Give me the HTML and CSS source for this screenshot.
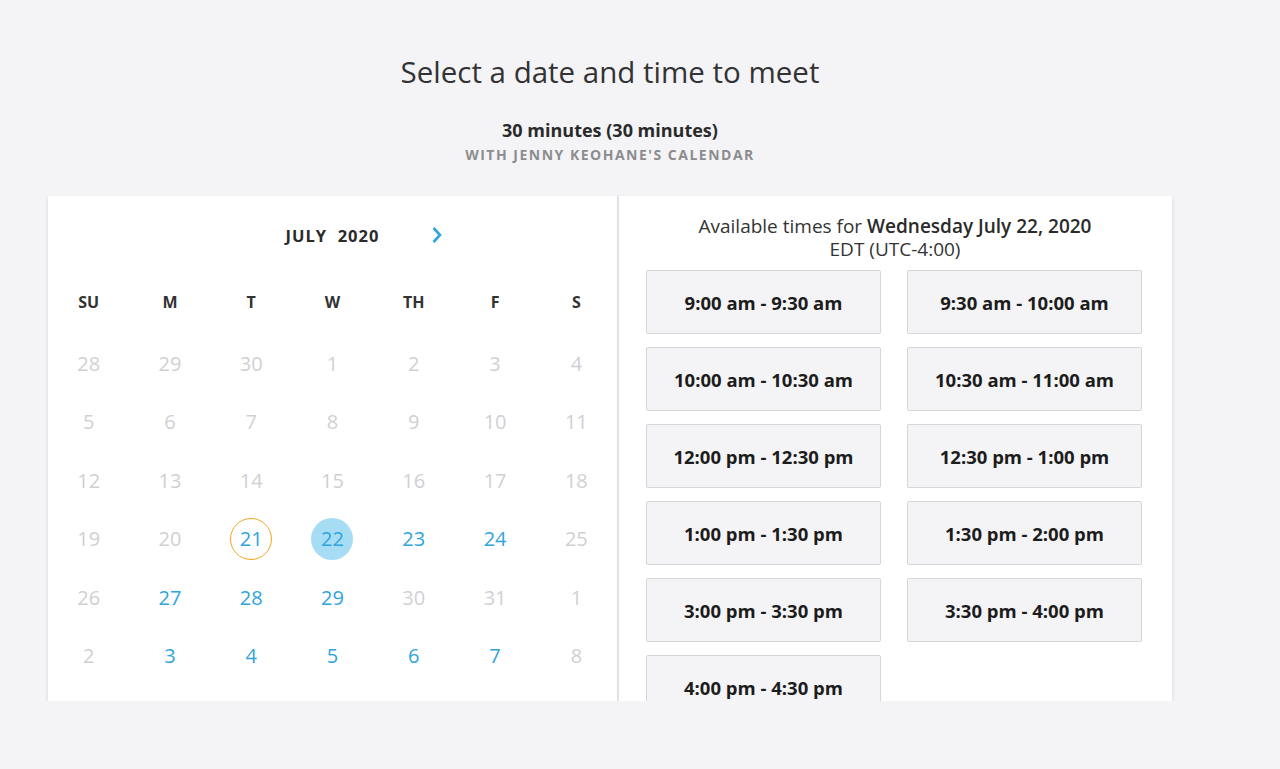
FILE: index.html
```html
<!DOCTYPE html>
<html lang="en">
  <head>
    <meta charset="UTF-8" />
    <meta name="viewport" content="width=device-width, initial-scale=1.0" />
    <title>Select a date and time to meet</title>
    <link rel="stylesheet" href="styles.css">
  </head>
  <body>
    <div class="page">
      <header class="intro">
        <h1>Select a date and time to meet</h1>
        <p class="duration">30 minutes (30 minutes)</p>
        <p class="owner">With Jenny Keohane's calendar</p>
      </header>

      <div class="card">
        <div class="calendar">
          <div class="month">
            <span class="month-name">JULY&nbsp; 2020</span>
            <span class="next">
              <svg width="12" height="18" viewBox="0 0 12 18"><path d="M2.5 2 L9 9 L2.5 16" fill="none" stroke="#2fa4dd" stroke-width="2.6" /></svg>
            </span>
          </div>
          <div class="weekdays">
            <span>SU</span><span>M</span><span>T</span><span>W</span><span>TH</span><span>F</span><span>S</span>
          </div>
          <div class="days">
            <span class="off">28</span><span class="off">29</span><span class="off">30</span><span class="off">1</span><span class="off">2</span><span class="off">3</span><span class="off">4</span>
            <span class="off">5</span><span class="off">6</span><span class="off">7</span><span class="off">8</span><span class="off">9</span><span class="off">10</span><span class="off">11</span>
            <span class="off">12</span><span class="off">13</span><span class="off">14</span><span class="off">15</span><span class="off">16</span><span class="off">17</span><span class="off">18</span>
            <span class="off">19</span><span class="off">20</span><span class="on today"><b>21</b></span><span class="on selected"><b>22</b></span><span class="on">23</span><span class="on">24</span><span class="off">25</span>
            <span class="off">26</span><span class="on">27</span><span class="on">28</span><span class="on">29</span><span class="off">30</span><span class="off">31</span><span class="off">1</span>
            <span class="off">2</span><span class="on">3</span><span class="on">4</span><span class="on">5</span><span class="on">6</span><span class="on">7</span><span class="off">8</span>
          </div>
        </div>

        <div class="times">
          <div class="times-head">
            Available times for <strong>Wednesday July 22, 2020</strong><br />
            EDT (UTC-4:00)
          </div>
          <div class="slots">
            <button class="slot">9:00 am - 9:30 am</button>
            <button class="slot">9:30 am - 10:00 am</button>
            <button class="slot">10:00 am - 10:30 am</button>
            <button class="slot">10:30 am - 11:00 am</button>
            <button class="slot">12:00 pm - 12:30 pm</button>
            <button class="slot">12:30 pm - 1:00 pm</button>
            <button class="slot">1:00 pm - 1:30 pm</button>
            <button class="slot">1:30 pm - 2:00 pm</button>
            <button class="slot">3:00 pm - 3:30 pm</button>
            <button class="slot">3:30 pm - 4:00 pm</button>
            <button class="slot">4:00 pm - 4:30 pm</button>
          </div>
        </div>
      </div>
    </div>
  </body>
</html>
```

FILE: styles.css
```css
* {
  box-sizing: border-box;
}

body {
  margin: 0;
  background-color: #f4f4f6;
  font-family: "Open Sans", Lato, Arial, sans-serif;
  color: #333;
}

.page {
  width: 1124px;
  margin-left: 48px;
}

.intro {
  text-align: center;
  padding-top: 52px;
}

h1 {
  margin: 0;
  font-size: 29.5px;
  font-weight: 400;
  line-height: 40px;
  color: #333;
}

.duration {
  margin: 26px 0 0;
  font-size: 18px;
  font-weight: 700;
  line-height: 24px;
  color: #2a2a2a;
}

.owner {
  margin: 3px 0 0;
  font-size: 14px;
  font-weight: 700;
  line-height: 20px;
  letter-spacing: 1.5px;
  text-transform: uppercase;
  color: #8c8c8f;
}

.card {
  display: flex;
  height: 505px;
  margin-top: 31px;
  background: #fff;
  box-shadow: 0 2px 4px rgba(0, 0, 0, 0.12);
}

/* calendar */
.calendar {
  width: 571px;
  padding-top: 20px;
  border-right: 2px solid #e2e2e6;
}

.month {
  display: flex;
  justify-content: center;
  align-items: center;
  height: 38px;
  padding-left: 64px;
}

.month-name {
  font-size: 16.5px;
  font-weight: 700;
  letter-spacing: 1px;
  color: #2a2a2a;
}

.next {
  display: flex;
  margin-left: 52px;
}

.weekdays,
.days {
  display: grid;
  grid-template-columns: repeat(7, 1fr);
  text-align: center;
}

.weekdays {
  height: 58px;
  align-items: center;
  margin-top: 19px;
  margin-bottom: 3px;
  font-size: 16px;
  font-weight: 700;
  color: #333;
}

.days {
  grid-auto-rows: 58.5px;
  align-items: center;
  font-size: 20px;
}

.days span {
  display: flex;
  justify-content: center;
  align-items: center;
}

.off {
  color: #d0d0d4;
}

.on {
  color: #2fa4dd;
}

.days b {
  display: flex;
  justify-content: center;
  align-items: center;
  width: 42px;
  height: 42px;
  border-radius: 50%;
  font-weight: 400;
}

.today b {
  border: 1.5px solid #f5a623;
}

.selected b {
  background: #a6dcf4;
}

/* time slots */
.times {
  flex: 1;
  padding: 19px 28px 0 27px;
  overflow: hidden;
}

.times-head {
  text-align: center;
  font-size: 19px;
  line-height: 23px;
  color: #333;
}

.times-head strong {
  font-weight: 600;
  color: #2a2a2a;
}

.slots {
  display: grid;
  grid-template-columns: 235px 235px;
  column-gap: 26px;
  row-gap: 13px;
  margin-top: 9px;
}

.slot {
  height: 64px;
  padding: 0;
  background: #f4f4f6;
  border: 1px solid #d6d6da;
  border-radius: 2px;
  font-family: inherit;
  font-size: 18.5px;
  font-weight: 700;
  color: #1c1c1c;
  cursor: pointer;
}
```
